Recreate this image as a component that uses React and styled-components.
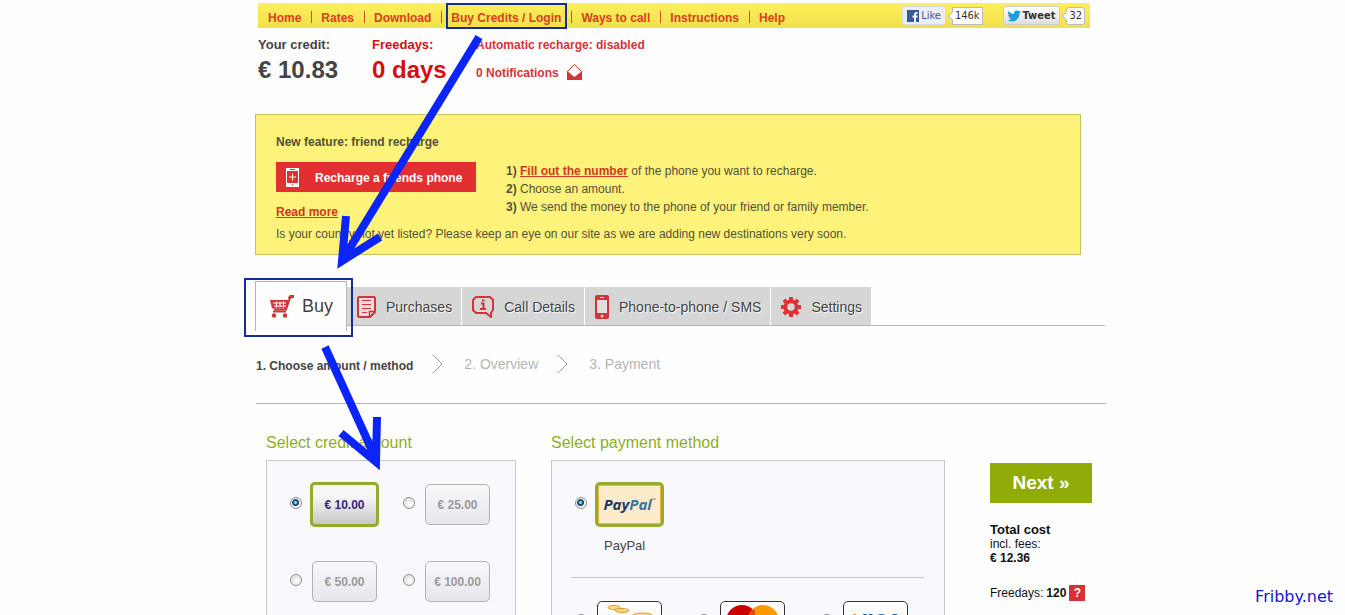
import React from 'react';
import styled, { createGlobalStyle, css } from 'styled-components';

const RED = '#d2343a';
const GREEN = '#93ac2e';

const Global = createGlobalStyle`
  *, *::before, *::after { box-sizing: border-box; }
  body { margin: 0; background: #fefefe; color: #444; font: 12px/18px "Liberation Sans", Arial, sans-serif; }
  h2, p, ol, ul, fieldset { margin: 0; padding: 0; border: 0; }
  ol, ul { list-style: none; }
  button { font-family: inherit; border: 0; cursor: pointer; }
  a { color: inherit; text-decoration: none; }
  svg { flex: none; }
`;

const Page = styled.div`
  position: relative;
  height: 100vh;
  overflow: hidden auto;
  scrollbar-width: none;
  padding-left: 17px;
`;
const Content = styled.div`
  position: relative;
  max-width: 850px;
  margin: 0 auto;
  padding-top: 3px;
`;
const Nav = styled.nav`
  display: flex;
  align-items: center;
  height: 25px;
  margin: 0 16px 0 2px;
  padding: 0 5px 0 10px;
  background: linear-gradient(#ffef5c, #f0e04a);
`;
const NavLink = styled.a`
  color: #d8401f;
  font-weight: bold;
  padding-top: 4px;
  & + &::before { content: ''; display: inline-block; width: 1px; height: 12px; margin: 0 9px 0 10px; background: #c9531f; vertical-align: -1px; }
`;
const Social = styled.div`
  display: flex;
  align-items: center;
  gap: 6px;
  margin-left: ${p => (p.$push ? 'auto' : '20px')};
`;
const SocialButton = styled.button`
  display: flex;
  align-items: center;
  gap: 2px;
  height: 19px;
  padding: 0 4px;
  border: 1px solid ${p => (p.$tweet ? '#ccc' : '#d5dbe6')};
  border-radius: 3px;
  background: ${p => (p.$tweet ? 'linear-gradient(#fff, #dedede)' : '#eceef5')};
  color: ${p => (p.$tweet ? '#333' : '#3b5998')};
  font: ${p => (p.$tweet ? 'bold' : 'normal')} 11px "DejaVu Sans Condensed", "DejaVu Sans", sans-serif;
`;
const Count = styled.span`
  position: relative;
  height: 18px;
  padding: 0 2px;
  border: 1px solid #bbb;
  border-radius: ${p => (p.$round ? '3px' : '0')};
  background: #fff;
  color: #333;
  font: 11px/16px "DejaVu Sans Condensed", "DejaVu Sans", sans-serif;
  &::before { content: ''; position: absolute; left: -4px; top: 5px; width: 6px; height: 6px; background: #fff; border: solid #bbb; border-width: 0 0 1px 1px; transform: rotate(45deg); }
`;
const Status = styled.section`
  display: flex;
  height: 86px;
  padding: 8px 0 0 2px;
`;
const Figure = styled.div`
  width: ${p => p.$width};
  color: ${p => p.$color};
  font-size: 13px;
  font-weight: bold;
`;
const Amount = styled.div`
  font-size: 24px;
  line-height: 32px;
  white-space: nowrap;
`;
const Notices = styled.div`
  color: ${RED};
  font-weight: bold;
`;
const NoticeLine = styled.a`
  display: flex;
  align-items: flex-start;
  gap: 8px;
  margin-bottom: 10px;
`;
const Feature = styled.section`
  margin: 0 25px 0 -1px;
  padding: 18px 20px 11px;
  border: 1px solid #c9bf5c;
  background: #fdf27a;
  color: #555138;
`;
const FeatureTitle = styled.h2`
  font-size: 12px;
  line-height: 18px;
`;
const FeatureRow = styled.div`
  display: flex;
  gap: 30px;
  padding-top: 11px;
`;
const FeatureLeft = styled.div`
  width: 200px;
`;
const Recharge = styled.button`
  display: flex;
  align-items: center;
  gap: 15px;
  width: 100%;
  height: 30px;
  margin-bottom: 11px;
  padding: 0 9px;
  background: #e22f31;
  color: #fff;
  font-size: 12px;
  font-weight: bold;
  & span { padding-top: 2px; }
`;
const RedLink = styled.a`
  color: #d0391e;
  font-weight: bold;
  text-decoration: underline;
`;
const Note = styled.p`
  padding-top: 4px;
`;
const Tabs = styled.nav`
  display: flex;
  align-items: flex-end;
  height: 45px;
  margin: 26px 1px 0 -1px;
  border-bottom: 1px solid #b4b4b4;
`;
const Tab = styled.a`
  display: flex;
  align-items: center;
  height: 38px;
  gap: 10px;
  padding: 2px 9px 0 10px;
  border-right: 1px solid #fff;
  background: #d6d6d6;
  color: #444;
  font-size: 14px;
  text-shadow: 1px 1px 1px #fff;
  ${p => p.$active && css`
    position: relative;
    width: 92px;
    height: 50px;
    margin-bottom: -6px;
    gap: 7px;
    padding: 0 0 2px 14px;
    border: 1px solid #b4b4b4;
    border-bottom: 0;
    background: #fefefe;
    font-size: 18px;
    text-shadow: none;
  `}
`;
const Steps = styled.ol`
  display: flex;
  align-items: center;
  height: 78px;
  border-bottom: 1px solid #b4b4b4;
`;
const Step = styled.li`
  display: flex;
  align-items: center;
  padding-bottom: 2px;
  color: #b5b5b5;
  font-size: 14px;
  ${p => p.$current && css`color: #444; font-size: 12px; font-weight: bold; padding: 2px 0 0;`}
`;
const Chevron = styled.svg`
  margin: 0 19px 0 18px;
`;
const Checkout = styled.form`
  display: flex;
  align-items: flex-start;
  padding: 28px 14px 0 10px;
`;
const Group = styled.section`
  flex: ${p => p.$flex};
  min-width: 0;
  margin-right: ${p => p.$gap};
`;
const Heading = styled.h2`
  color: #8fae1b;
  font-size: 16px;
  font-weight: normal;
  line-height: 22px;
  padding-bottom: 6px;
`;
const Panel = styled.div`
  padding: 0 20px 0 19px;
  border: 1px solid #c8c8cb;
  background: #f8f8fd;
`;
const Amounts = styled.fieldset`
  display: grid;
  grid-template-columns: 113px 1fr;
  grid-auto-rows: 77px;
  padding: 5px 0 12px 3px;
`;
const Option = styled.label`
  display: flex;
  align-items: center;
  gap: 8px;
  height: 77px;
`;
const Radio = styled.input`
  appearance: none;
  flex: none;
  width: 12px;
  height: 12px;
  margin: 0 0 3px 1px;
  border: 1px solid #8c8c8c;
  border-radius: 50%;
  background: radial-gradient(circle at 60% 60%, #fff 10%, #ccc 90%);
  box-shadow: inset 0 0 0 1px #f4f4f4;
  &:checked { background: radial-gradient(circle at 45% 45%, #7fd0ee 0 1px, #16608c 2px, #103a5c 3px, #f4f4f4 4px); }
`;
const Face = styled.span`
  display: flex;
  flex: none;
  align-items: center;
  justify-content: center;
  width: 65px;
  height: 41px;
  margin: 0 2px;
  border: 1px solid #b0b0b5;
  border-radius: 5px;
  background: linear-gradient(#f8f8fb, #e6e6eb);
  color: #9a9a9c;
  font-weight: bold;
  ${Radio}:checked + & {
    width: 69px;
    height: 45px;
    margin: 0;
    border: 3px solid ${GREEN};
    box-shadow: 0 0 1px #b5d030;
    background: linear-gradient(#f6f6f6 30%, #c8c8c8);
    color: #2c2885;
  }
`;
const PayPalOption = styled(Option)`
  height: 56px;
`;
const PayPalFace = styled(Face)`
  &&&& {
    background: #feebcb;
    box-shadow: inset 0 0 0 1px #f3b33d;
    font: italic bold 15px "Open Sans", sans-serif;
    color: #1c3a66;
  }
`;
const PayPalTail = styled.span`
  color: #40729c;
`;
const Mark = styled.sup`
  font-size: 5px;
  line-height: 5px;
  align-self: flex-start;
  padding-top: 13px;
  color: #40729c;
`;
const PayPal = styled.div`
  height: 117px;
  padding: 15px 0 0 3px;
  border-bottom: 1px solid #c8c8cb;
`;
const PayPalName = styled.p`
  padding: 5px 0 0 30px;
  font-size: 13px;
`;
const Cards = styled.fieldset`
  display: grid;
  grid-template-columns: repeat(2, 123px) 1fr;
  min-width: 0;
  padding: 5px 0 12px 3px;
`;
const CardFace = styled(Face)`
  border-color: #333;
  overflow: hidden;
  background: linear-gradient(#fff, #eee);
`;
const Summary = styled.aside`
  flex: none;
  width: 102px;
  padding-top: 31px;
  color: #111;
  line-height: 14px;
`;
const Next = styled.button`
  width: 100%;
  height: 40px;
  margin-bottom: 20px;
  background: #91ab0a;
  color: #fff;
  font-size: 19px;
  font-weight: bold;
`;
const Total = styled.strong`
  display: block;
  font-size: ${p => p.$size || '12px'};
`;
const Free = styled.p`
  display: flex;
  align-items: center;
  gap: 3px;
  padding-top: 20px;
  white-space: nowrap;
`;
const Help = styled.button`
  width: 16px;
  height: 16px;
  padding: 0;
  background: #d9303a;
  color: #fff;
  font-size: 12px;
  font-weight: bold;
  line-height: 16px;
`;
const Annotations = styled.svg`
  position: absolute;
  top: 0;
  left: 0;
  pointer-events: none;
  overflow: visible;
`;
const Credit = styled.a`
  position: absolute;
  right: 12px;
  top: 586px;
  color: #1414d8;
  font: 16px/22px "DejaVu Sans", Verdana, sans-serif;
`;

const Cart = () => (
  <svg width="25" height="24" viewBox="0 0 25 24" fill="none" stroke={RED}>
    <path d="M20 4L16 15.5H4" strokeWidth="2" />
    <path d="M0 6h19.500l-3 8.500H2z" fill={RED} stroke="none" />
    <path d="M19 5l1.500-2.500H24" strokeWidth="3" />
    <path d="M3 9h13M4 12h12M6.500 7.500v6M10 7.500v6M13.500 7.500v6" stroke="#fff" />
    <path d="M3 17.500h13" strokeWidth="2" />
    <circle cx="4" cy="21.500" r="2.200" fill={RED} stroke="none" /><circle cx="15" cy="21.500" r="2.200" fill={RED} stroke="none" />
  </svg>
);
const Receipt = () => (
  <svg width="19" height="22" viewBox="0 0 19 22" fill="none" stroke={RED}>
    <path d="M2 1h15l1 1v14l-5 5H2l-1-1V2z" fill="#e4dcdc" strokeWidth="2" />
    <path d="M12.500 21v-5.500H18" strokeWidth="1.500" />
    <path d="M5 4.500h9M5 8.500h9M5 12.500h9M5 16.500h5" />
  </svg>
);
const Info = () => (
  <svg width="22" height="22" viewBox="0 0 22 22" fill="none" stroke={RED} strokeWidth="2">
    <path d="M4 1h14l3 3v10l-2 3v4l-5-4H4l-3-3V4z" />
    <path d="M9 7.500h2.500v5M8 13h6M10 4.500h2.500" />
  </svg>
);
const Phone = () => (
  <svg width="14" height="24" viewBox="0 0 14 24">
    <rect width="14" height="24" rx="2" fill={RED} />
    <path d="M2 5h10v13H2z" fill="#e2dede" />
    <path d="M5 2.5h4M7 19.500v3M5.500 21h3" stroke="#fff" />
  </svg>
);
const Gear = () => (
  <svg width="20" height="20" viewBox="-10 -10 20 20">
    {[0, 45, 90, 135].map(a => <rect key={a} x="-2" y="-10" width="4" height="20" fill="#e03135" transform={`rotate(${a})`} />)}
    <circle r="7.5" fill="#e03135" /><circle r="3.8" fill="#d6d6d6" />
  </svg>
);
const Envelope = () => (
  <svg width="15" height="16" viewBox="0 0 15 16">
    <path d="M.5 7.5l7-7 7 7v8H.5z" fill="#fff" stroke={RED} />
    <path d="M0 7l7.500 6L15 7v9H0z" fill={RED} />
  </svg>
);
const RechargePhone = () => (
  <svg width="15" height="19" viewBox="0 0 15 19">
    <path d="M1 0h13v19H1z" fill="#fff" /><path d="M2 3h11v12H2z" fill="#e22f31" />
    <path d="M7.500 5.500v7M4 9h7" stroke="#fff" /><path d="M5 1.500h5M6.500 17h2" stroke="#e22f31" />
  </svg>
);
const Facebook = () => (
  <svg width="12" height="12" viewBox="0 0 12 12">
    <path d="M0 0h12v12H0z" fill="#3b5998" />
    <path d="M10.500 3H9.500Q8 3 8 4.500V12M5.500 6.500h5" fill="none" stroke="#fff" strokeWidth="1.800" />
  </svg>
);
const Bird = () => (
  <svg width="13" height="12" viewBox="1 2 23 20">
    <path fill="#1b9fd8" d="M23.950 4.570a10 10 0 0 1-2.820.770 4.960 4.960 0 0 0 2.160-2.720c-.950.550-2 .950-3.130 1.180a4.920 4.920 0 0 0-8.380 4.480C7.690 8.100 4.070 6.130 1.640 3.160a4.930 4.930 0 0 0 1.520 6.570 4.900 4.900 0 0 1-2.230-.610v.060a4.920 4.920 0 0 0 3.950 4.830 5 5 0 0 1-2.210.080 4.940 4.940 0 0 0 4.600 3.420A9.870 9.870 0 0 1 0 19.540a14 14 0 0 0 7.550 2.210c9.050 0 14-7.500 14-13.980l-.010-.640a10 10 0 0 0 2.410-2.560z" />
  </svg>
);
const Coins = () => (
  <svg width="63" height="39" viewBox="0 0 63 39" fill="#fbd98a" stroke="#e09a35">
    <ellipse cx="16" cy="5.500" rx="6" ry="2" /><ellipse cx="24" cy="8.500" rx="7" ry="2" />
    <path d="M34 14v14h21V14" /><ellipse cx="44.500" cy="14" rx="10.500" ry="3" />
    <path d="M6 19v13h22V19" /><ellipse cx="17" cy="19" rx="11" ry="3.500" />
  </svg>
);
const MasterCard = () => (
  <svg width="63" height="39" viewBox="0 0 63 39">
    <circle cx="21" cy="19" r="16" fill="#c00" /><circle cx="42" cy="19" r="16" fill="#f90" />
    <path d="M29 9h5M27 11h7M26 13h8M26 15h8" stroke="#c00" />
  </svg>
);
const Visa = styled.span`
  color: transparent;
  background: linear-gradient(100deg, #f0a03a 9px, #1767a8 10px);
  background-clip: text;
  font: italic bold 24px/24px "Open Sans", sans-serif;
`;

const TABS = [['Purchases', Receipt], ['Call Details', Info], ['Phone-to-phone / SMS', Phone], ['Settings', Gear]];
const NAV = ['Home', 'Rates', 'Download', 'Buy Credits / Login', 'Ways to call', 'Instructions', 'Help'];
const METHODS = [['Bank transfer', <Coins />], ['MasterCard', <MasterCard />], ['Visa', <Visa>VISA</Visa>]];
const Arrow = () => <Chevron width="14" height="18" viewBox="0 0 14 18"><path d="M2 0l9 9-9 9" fill="none" stroke="#999" /></Chevron>;

export default function App() {
  return (
    <Page>
      <Global />
      <Content>
        <Nav>
          {NAV.map(n => <NavLink key={n} href="#">{n}</NavLink>)}
          <Social $push><SocialButton><Facebook />Like</SocialButton><Count>146k</Count></Social>
          <Social><SocialButton $tweet><Bird />Tweet</SocialButton><Count $round>32</Count></Social>
        </Nav>
        <Status>
          <Figure $width="114px" $color="#444">Your credit:<Amount>€ 10.83</Amount></Figure>
          <Figure $width="104px" $color="#d40d12">Freedays:<Amount>0 days</Amount></Figure>
          <Notices>
            <NoticeLine href="#">Automatic recharge: disabled</NoticeLine>
            <NoticeLine href="#">0 Notifications <Envelope /></NoticeLine>
          </Notices>
        </Status>
        <Feature>
          <FeatureTitle>New feature: friend recharge</FeatureTitle>
          <FeatureRow>
            <FeatureLeft>
              <Recharge><RechargePhone /><span>Recharge a friends phone</span></Recharge>
              <RedLink href="#">Read more</RedLink>
            </FeatureLeft>
            <ol>
              <li><b>1)</b> <RedLink href="#">Fill out the number</RedLink> of the phone you want to recharge.</li>
              <li><b>2)</b> Choose an amount.</li>
              <li><b>3)</b> We send the money to the phone of your friend or family member.</li>
            </ol>
          </FeatureRow>
          <Note>Is your country not yet listed? Please keep an eye on our site as we are adding new destinations very soon.</Note>
        </Feature>
        <Tabs>
          <Tab href="#" $active><Cart />Buy</Tab>
          {TABS.map(([name, Icon]) => <Tab key={name} href="#"><Icon />{name}</Tab>)}
        </Tabs>
        <Steps>
          <Step $current>1. Choose amount / method</Step>
          <Step><Arrow />2. Overview</Step>
          <Step><Arrow />3. Payment</Step>
        </Steps>
        <Checkout>
          <Group $flex="0 0 250px" $gap="35px">
            <Heading>Select credit amount</Heading>
            <Panel>
              <Amounts>
                {['10.00', '25.00', '50.00', '100.00'].map((a, i) => (
                  <Option key={a}><Radio type="radio" name="amount" defaultChecked={i === 0} /><Face>€ {a}</Face></Option>
                ))}
              </Amounts>
            </Panel>
          </Group>
          <Group $flex="1 1 0" $gap="45px">
            <Heading>Select payment method</Heading>
            <Panel>
              <PayPal>
                <PayPalOption>
                  <Radio type="radio" name="method" defaultChecked />
                  <PayPalFace>Pay<PayPalTail>Pal</PayPalTail><Mark>™</Mark></PayPalFace>
                </PayPalOption>
                <PayPalName>PayPal</PayPalName>
              </PayPal>
              <Cards>
                {METHODS.map(([name, art]) => (
                  <Option key={name}><Radio type="radio" name="method" aria-label={name} /><CardFace>{art}</CardFace></Option>
                ))}
              </Cards>
            </Panel>
          </Group>
          <Summary>
            <Next type="button">Next »</Next>
            <Total $size="13px">Total cost</Total>
            <p>incl. fees:</p>
            <Total>€ 12.36</Total>
            <Free>Freedays: <b>120</b> <Help type="button">?</Help></Free>
          </Summary>
        </Checkout>
        <Annotations width="850" height="615" viewBox="256 0 850 615" fill="none" stroke="#0a24fa" strokeWidth="8">
          <path d="M479 37L342 261M346 216l-4 45 38-24" />
          <path d="M325 347l51 112M341 433l35 29 1-45" />
          <g stroke="#142c9c" strokeWidth="2">
            <rect x="447" y="4" width="119" height="24" />
            <rect x="245" y="279" width="107" height="57" />
          </g>
        </Annotations>
      </Content>
      <Credit href="#">Fribby.net</Credit>
    </Page>
  );
}
